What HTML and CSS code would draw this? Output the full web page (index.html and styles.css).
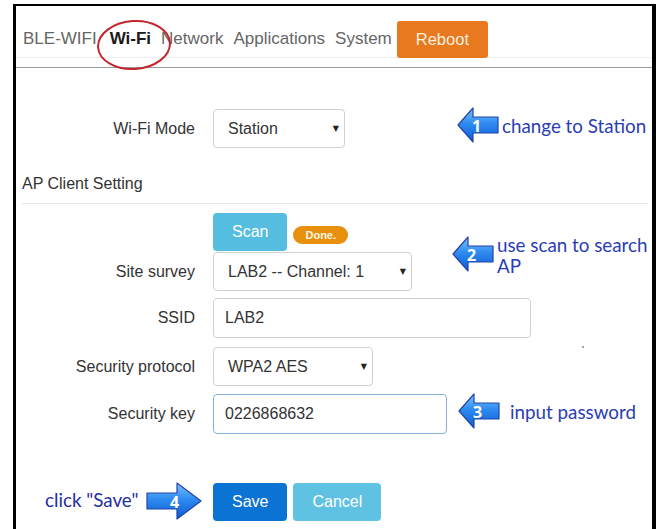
FILE: index.html
```html
<!DOCTYPE html>
<html lang="en">
<head>
<meta charset="utf-8">
<title>Wi-Fi</title>
<link rel="stylesheet" href="styles.css">
</head>
<body>
<div class="frame">
  <nav class="nav">
    <a class="nav-item">BLE-WIFI</a>
    <a class="nav-item active">Wi-Fi</a>
    <a class="nav-item">Network</a>
    <a class="nav-item">Applications</a>
    <a class="nav-item">System</a>
    <button class="btn btn-reboot" type="button">Reboot</button>
  </nav>
  <hr class="rule">

  <form class="form">
    <div class="row row-mode">
      <label class="label">Wi-Fi Mode</label>
      <div class="select w-mode"><span>Station</span><span class="caret">▼</span></div>
    </div>

    <h2 class="section">AP Client Setting</h2>

    <div class="row row-scan">
      <span class="label"></span>
      <div class="scan-group">
        <button class="btn btn-info" type="button">Scan</button>
        <span class="badge">Done.</span>
      </div>
    </div>
    <div class="row row-survey">
      <label class="label">Site survey</label>
      <div class="select w-survey"><span>LAB2 -- Channel: 1</span><span class="caret">▼</span></div>
    </div>
    <div class="row row-ssid">
      <label class="label">SSID</label>
      <input class="input w-ssid" type="text" value="LAB2">
    </div>
    <div class="row row-proto">
      <label class="label">Security protocol</label>
      <div class="select w-proto"><span>WPA2 AES</span><span class="caret">▼</span></div>
    </div>
    <div class="row row-key">
      <label class="label">Security key</label>
      <input class="input input-focus w-key" type="text" value="0226868632">
    </div>
    <div class="row row-actions">
      <span class="label"></span>
      <div class="actions">
        <button class="btn btn-primary" type="button">Save</button>
        <button class="btn btn-info btn-cancel" type="button">Cancel</button>
      </div>
    </div>
  </form>

  <!-- callouts drawn over the form -->
  <svg class="ring" width="76" height="52" viewBox="0 0 76 52">
    <ellipse cx="38" cy="26" rx="36" ry="24" fill="none" stroke="#c4262e" stroke-width="2" transform="rotate(-4 38 26)"/>
  </svg>

  <div class="callout callout-1">
    <svg class="arrow" width="42" height="36" viewBox="0 0 42 36">
      <defs>
        <linearGradient id="blueL" x1="0" y1="0" x2="0" y2="1">
          <stop offset="0" stop-color="#7cc2fa"/>
          <stop offset="0.45" stop-color="#2f8bf0"/>
          <stop offset="1" stop-color="#0d5bd4"/>
        </linearGradient>
      </defs>
      <polygon points="1,18 16,1 16,10 41,10 41,26 16,26 16,35" fill="url(#blueL)" stroke="#2344a8" stroke-width="1.2" stroke-linejoin="round"/>
      <text x="15" y="25" class="arrow-num">1</text>
    </svg>
    <span class="note">change to Station</span>
  </div>

  <div class="callout callout-2">
    <svg class="arrow" width="42" height="36" viewBox="0 0 42 36">
      <polygon points="1,18 16,1 16,10 41,10 41,26 16,26 16,35" fill="url(#blueL)" stroke="#2344a8" stroke-width="1.2" stroke-linejoin="round"/>
      <text x="15" y="25" class="arrow-num">2</text>
    </svg>
    <span class="note">use scan to search<br>AP</span>
  </div>

  <div class="callout callout-3">
    <svg class="arrow" width="42" height="36" viewBox="0 0 42 36">
      <polygon points="1,18 16,1 16,10 41,10 41,26 16,26 16,35" fill="url(#blueL)" stroke="#2344a8" stroke-width="1.2" stroke-linejoin="round"/>
      <text x="15" y="25" class="arrow-num">3</text>
    </svg>
    <span class="note">input password</span>
  </div>

  <div class="callout callout-4">
    <span class="note note-dark">click "Save"</span>
    <svg class="arrow" width="56" height="38" viewBox="0 0 56 38">
      <polygon points="1,11 31,11 31,1 55,19 31,37 31,27 1,27" fill="url(#blueL)" stroke="#2344a8" stroke-width="1.2" stroke-linejoin="round"/>
      <text x="24" y="26" class="arrow-num">4</text>
    </svg>
  </div>

  <span class="speck"></span>
</div>
</body>
</html>
```

FILE: styles.css
```css
html, body {
  margin: 0;
  height: 529px;
  overflow: hidden;
  background: #fff;
}

body {
  font-family: "Liberation Sans", Arial, sans-serif;
  font-size: 16px;
  color: #333;
}

.frame {
  position: relative;
  box-sizing: border-box;
  width: 643px;
  height: 525px;
  margin: 4px 0 0 13px;
  border-left: 3px solid #000;
  border-right: 4px solid #000;
  border-top: 2px solid #000;
}

/* top navigation */
.nav {
  display: flex;
  align-items: center;
  height: 52px;
  box-sizing: border-box;
  padding: 15px 0 0 7px;
  border-bottom: 1px solid #eee;
}

.nav-item {
  font-size: 17px;
  color: #666;
  margin-right: 10px;
  line-height: 20px;
}

.nav-item:first-child {
  margin-right: 13px;
}

.nav-item.active {
  color: #1a1a1a;
  font-weight: bold;
}

.btn {
  font-family: "Liberation Sans", Arial, sans-serif;
  font-size: 16px;
  color: #fff;
  border: none;
  border-radius: 4px;
  height: 38px;
  padding: 0 19px;
  cursor: pointer;
}

.btn-reboot {
  height: 37px;
  margin-left: -5px;
  padding: 0 19px;
  font-size: 16.5px;
  background: #e8791f;
  color: #fbeede;
  border-radius: 3px;
}

.btn-info {
  background: #55bde0;
}

.btn-primary {
  background: #0b73d3;
}

.rule {
  margin: 9px 0 0;
  border: none;
  border-top: 1px solid #9a9a9a;
  height: 0;
}

/* form rows */
.form {
  display: flex;
  flex-direction: column;
}

.row {
  display: grid;
  grid-template-columns: 179px max-content;
  column-gap: 18px;
  align-items: center;
  margin-top: 8px;
}

.label {
  text-align: right;
  color: #333;
}

.row-mode {
  margin-top: 41px;
}

.section {
  margin: 26px 4px 0 6px;
  padding-bottom: 9px;
  font-size: 16px;
  font-weight: normal;
  line-height: 20px;
  color: #333;
  border-bottom: 1px solid #e6e6e6;
}

.row-scan {
  margin-top: 9px;
}

.row-survey {
  margin-top: 1px;
}

.row-ssid {
  margin-top: 7px;
}

.row-proto {
  margin-top: 9px;
}

.row-key {
  margin-top: 8px;
}

.row-actions {
  margin-top: 49px;
}

.scan-group {
  display: flex;
  align-items: flex-end;
  gap: 6px;
}

.badge {
  display: inline-block;
  height: 18px;
  line-height: 18px;
  padding: 0 12px;
  margin-bottom: 7px;
  border-radius: 9px;
  background: #e8900e;
  color: #fff6e4;
  font-size: 11px;
  font-weight: bold;
}

.select,
.input {
  box-sizing: border-box;
  height: 39px;
  border: 1px solid #d0d0d0;
  border-radius: 4px;
  background: #fff;
  color: #333;
  font-family: "Liberation Sans", Arial, sans-serif;
  font-size: 16px;
}

.select {
  display: flex;
  align-items: center;
  justify-content: space-between;
  padding: 0 5px 0 14px;
}

.caret {
  font-family: "DejaVu Sans", sans-serif;
  font-size: 8px;
  color: #222;
}

.input {
  height: 40px;
  padding: 0 11px;
  outline: none;
}

.input-focus {
  border-color: #86b2d8;
}

.w-mode { width: 132px; }
.w-survey { width: 199px; }
.w-ssid { width: 318px; }
.w-proto { width: 160px; }
.w-key { width: 234px; }

.actions {
  display: flex;
  gap: 6px;
}

.btn-cancel {
  background: #5fc2e2;
}

/* annotation callouts */
.ring {
  position: absolute;
  left: 80px;
  top: 13px;
}

.callout {
  position: absolute;
  display: flex;
  align-items: center;
}

.arrow {
  display: block;
  flex: none;
}

.arrow-num {
  font-family: "Open Sans", "Liberation Sans", sans-serif;
  font-size: 16px;
  font-weight: bold;
  fill: #fff;
}

.note {
  font-family: Lato, "Open Sans", sans-serif;
  font-size: 18.8px;
  line-height: 21px;
  color: #2a3db5;
  margin-left: 3px;
  white-space: nowrap;
}

.note-dark {
  color: #1f2fa3;
  margin: 0 8px 4px 0;
}

.callout-1 { left: 441px; top: 101px; }
.callout-2 { left: 436px; top: 230px; align-items: flex-start; }
.callout-2 .note { margin-top: -2px; }
.callout-3 { left: 442px; top: 387px; }
.callout-3 .note { margin-left: 10px; }
.callout-4 { left: 29px; top: 476px; }

.speck {
  position: absolute;
  left: 566px;
  top: 340px;
  width: 2px;
  height: 2px;
  background: #888;
  border-radius: 1px;
}
```
